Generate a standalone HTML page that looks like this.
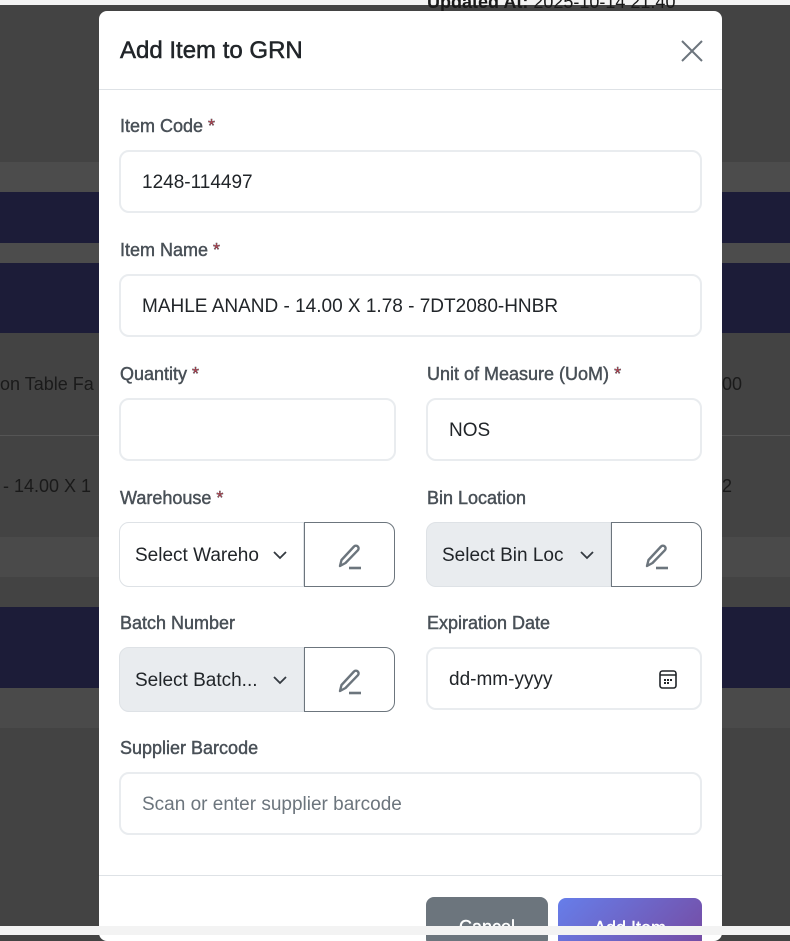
<!DOCTYPE html>
<html><head><meta charset="utf-8"><style>
*{box-sizing:border-box;margin:0;padding:0}
body{width:790px;height:935px;overflow:hidden;background:#434343;font-family:"Liberation Sans",sans-serif;position:relative}
.b{position:absolute;left:0;width:790px}
.modal{position:absolute;left:99px;top:11px;width:623px;height:930px;background:#fff;border-radius:8px;overflow:hidden}
.hdr{height:79px;border-bottom:1px solid #dee2e6;position:relative}
.hdr h1{position:absolute;left:21px;top:26px;font-size:24px;font-weight:400;color:#212529;-webkit-text-stroke:0.5px #212529}
.lbl{position:absolute;font-size:18px;color:#495057;-webkit-text-stroke:0.45px #495057}
.lbl span{color:#dc3545}
.inp{position:absolute;height:63px;border:2px solid #e9ecef;border-radius:10px;background:#fff;font-size:19px;color:#212529;padding-left:21px;line-height:61px}
.grp{position:absolute;height:65px;width:276px}
.sel{position:absolute;left:0;top:0;width:185px;height:65px;border:1px solid #dee2e6;border-radius:10px 0 0 10px;font-size:19px;color:#212529;padding-left:15px;line-height:65px;white-space:nowrap;overflow:hidden}
.sel.g{background:#e9ecef}
.sel svg{position:absolute;right:16px;top:28px}
.btn{position:absolute;left:185px;top:0;width:91px;height:65px;border:1px solid #6c757d;border-radius:0 10px 10px 0;background:#fff}
.btn svg{position:absolute;left:32px;top:19px}
</style></head><body>
<div class="b" style="top:0;height:5px;background:#f3f3f3"></div>
<div class="b" style="top:162px;height:30px;background:#4c4c4c"></div>
<div class="b" style="top:192px;height:51px;background:#1c1c38"></div>
<div class="b" style="top:243px;height:20px;background:#4c4c4c"></div>
<div class="b" style="top:263px;height:70px;background:#1c1c38"></div>
<div class="b" style="top:435px;height:1px;background:#555"></div>
<div class="b" style="top:537px;height:40px;background:#4a4a4a"></div>
<div class="b" style="top:607px;height:81px;background:#1c1c38"></div>
<div class="b" style="top:688px;height:40px;background:#4a4a4a"></div>
<div class="b" style="top:926px;height:9px;background:#f3f3f3;z-index:5"></div>
<div style="position:absolute;left:0;top:374px;font-size:18px;color:#1a1a1a">on Table Fa</div>
<div style="position:absolute;left:3px;top:476px;font-size:18px;color:#1a1a1a">- 14.00 X 1</div>
<div style="position:absolute;left:722px;top:374px;font-size:18px;color:#1a1a1a">00</div>
<div style="position:absolute;left:722px;top:476px;font-size:18px;color:#1a1a1a">2</div>
<div style="position:absolute;left:427px;top:-8px;font-size:18px;color:#1a1a1a"><b>Updated At:</b> 2025-10-14 21:40</div>
<div class="modal">
<div class="hdr"><h1>Add Item to GRN</h1>
<svg style="position:absolute;left:582px;top:29px" width="22" height="22" viewBox="0 0 22 22"><path d="M1 1L21 21M21 1L1 21" stroke="#6c757d" stroke-width="2"/></svg></div>
<div class="lbl" style="left:21px;top:105px">Item Code <span>*</span></div>
<div class="inp" style="left:20px;top:139px;width:583px">1248-114497</div>
<div class="lbl" style="left:21px;top:229px">Item Name <span>*</span></div>
<div class="inp" style="left:20px;top:263px;width:583px">MAHLE ANAND - 14.00 X 1.78 - 7DT2080-HNBR</div>
<div class="lbl" style="left:21px;top:353px">Quantity <span>*</span></div>
<div class="inp" style="left:20px;top:387px;width:277px"></div>
<div class="lbl" style="left:328px;top:353px">Unit of Measure (UoM) <span>*</span></div>
<div class="inp" style="left:327px;top:387px;width:276px">NOS</div>
<div class="lbl" style="left:21px;top:477px">Warehouse <span>*</span></div>
<div class="grp" style="left:20px;top:511px"><div class="sel">Select Wareho<svg width="14" height="9" viewBox="0 0 14 9"><path d="M1 1l6 6 6-6" fill="none" stroke="#343a40" stroke-width="1.8"/></svg></div><div class="btn"><svg width="28" height="28" viewBox="0 0 28 28"><path d="M3 24l1.5-6L17 4.5a2.6 2.6 0 013.8 3.8L8.5 21z" fill="none" stroke="#6c757d" stroke-width="2.4" stroke-linejoin="round"/><path d="M12 26h12" stroke="#6c757d" stroke-width="2.6"/></svg></div></div>
<div class="lbl" style="left:328px;top:477px">Bin Location</div>
<div class="grp" style="left:327px;top:511px"><div class="sel g">Select Bin Loc<svg width="14" height="9" viewBox="0 0 14 9"><path d="M1 1l6 6 6-6" fill="none" stroke="#343a40" stroke-width="1.8"/></svg></div><div class="btn"><svg width="28" height="28" viewBox="0 0 28 28"><path d="M3 24l1.5-6L17 4.5a2.6 2.6 0 013.8 3.8L8.5 21z" fill="none" stroke="#6c757d" stroke-width="2.4" stroke-linejoin="round"/><path d="M12 26h12" stroke="#6c757d" stroke-width="2.6"/></svg></div></div>
<div class="lbl" style="left:21px;top:602px">Batch Number</div>
<div class="grp" style="left:20px;top:636px"><div class="sel g">Select Batch...<svg width="14" height="9" viewBox="0 0 14 9"><path d="M1 1l6 6 6-6" fill="none" stroke="#343a40" stroke-width="1.8"/></svg></div><div class="btn"><svg width="28" height="28" viewBox="0 0 28 28"><path d="M3 24l1.5-6L17 4.5a2.6 2.6 0 013.8 3.8L8.5 21z" fill="none" stroke="#6c757d" stroke-width="2.4" stroke-linejoin="round"/><path d="M12 26h12" stroke="#6c757d" stroke-width="2.6"/></svg></div></div>
<div class="lbl" style="left:328px;top:602px">Expiration Date</div>
<div class="inp" style="left:327px;top:636px;width:276px">dd-mm-yyyy
<svg style="position:absolute;left:231px;top:21px" width="18" height="19" viewBox="0 0 18 19"><rect x="1" y="1" width="16" height="17" rx="2.5" fill="none" stroke="#212529" stroke-width="1.6"/><path d="M1 5h16" stroke="#212529" stroke-width="1.5"/><g fill="#212529"><rect x="5" y="9" width="2" height="2"/><rect x="8" y="9" width="2" height="2"/><rect x="11" y="9" width="2" height="2"/><rect x="5" y="12" width="2" height="2"/><rect x="8" y="12" width="2" height="2"/></g></svg></div>
<div class="lbl" style="left:21px;top:727px">Supplier Barcode</div>
<div class="inp" style="left:20px;top:761px;width:583px;color:#6c757d">Scan or enter supplier barcode</div>
<div style="position:absolute;left:0;top:864px;width:623px;height:1px;background:#dee2e6"></div>
<div style="position:absolute;left:327px;top:886px;width:122px;height:50px;background:#6c757d;border-radius:8px;color:#fff;font-size:18px;text-align:center;line-height:60px;-webkit-text-stroke:0.4px #fff">Cancel</div>
<div style="position:absolute;left:459px;top:887px;width:144px;height:50px;background:linear-gradient(135deg,#667eea,#764ba2);border-radius:8px;color:#fff;font-size:18px;text-align:center;line-height:60px;-webkit-text-stroke:0.4px #fff">Add Item</div>
</div>
</body></html>
